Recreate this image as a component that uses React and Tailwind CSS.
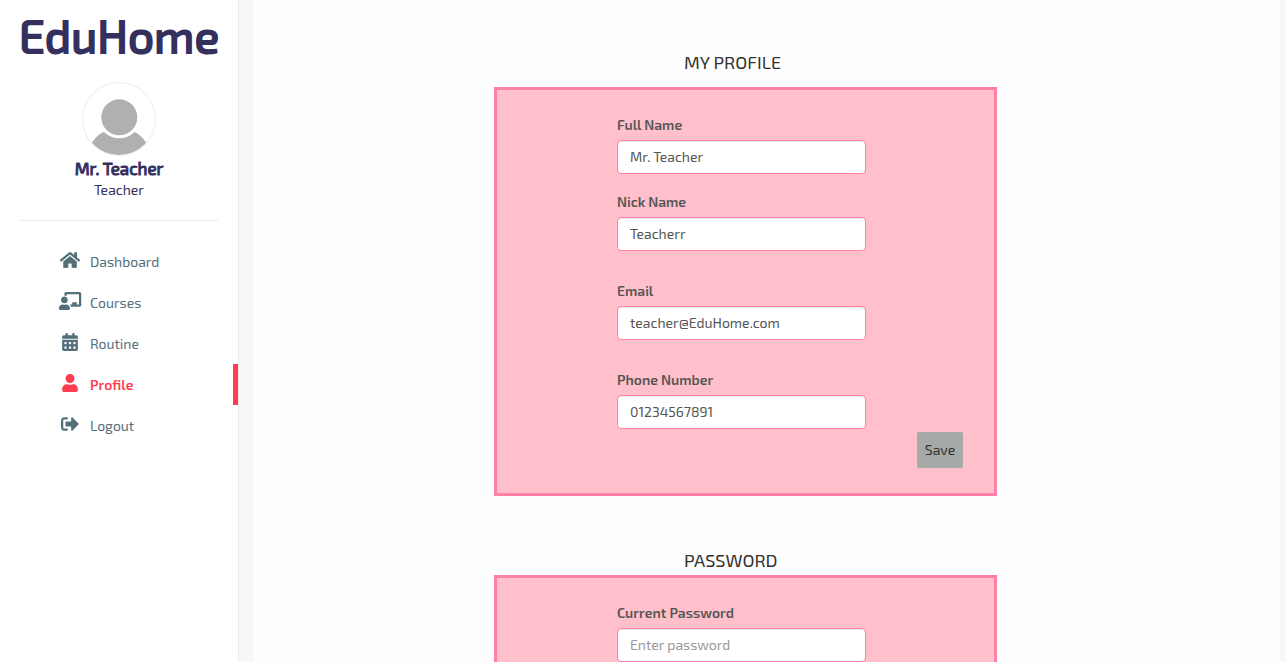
import { FaHome, FaChalkboardTeacher, FaCalendarAlt, FaUser, FaSignOutAlt } from "react-icons/fa";

const links = [
  { label: "Dashboard", Icon: FaHome },
  { label: "Courses", Icon: FaChalkboardTeacher },
  { label: "Routine", Icon: FaCalendarAlt },
  { label: "Profile", Icon: FaUser, active: true },
  { label: "Logout", Icon: FaSignOutAlt },
];

function Avatar() {
  return (
    <svg viewBox="0 0 74 74" className="size-[74px]" role="img" aria-label="Avatar">
      <defs>
        <clipPath id="avatar-clip">
          <circle cx="37" cy="37" r="36" />
        </clipPath>
      </defs>
      <circle cx="37" cy="37" r="36.5" fill="#fff" stroke="#ebebeb" />
      <g clipPath="url(#avatar-clip)">
        <circle cx="37" cy="79" r="33" fill="#b1b0af" />
        <circle cx="37.3" cy="35.3" r="21" fill="#fff" />
        <circle cx="37.3" cy="35.3" r="18" fill="#b1b0af" />
      </g>
    </svg>
  );
}

function NavLink({ label, Icon, active }) {
  return (
    <li>
      <a
        href="#"
        aria-current={active ? "page" : undefined}
        className={
          active
            ? "flex h-[41px] items-center gap-2 border-r-[5px] border-[#ff3d50] pl-[58px] font-semibold text-[#ff3d50]"
            : "flex h-[41px] items-center gap-2 border-r-[5px] border-transparent pl-[58px] text-[#546e7a]"
        }
      >
        <span className="flex w-6 justify-center pb-1">
          <Icon className="h-[18px] w-6" />
        </span>
        {label}
      </a>
    </li>
  );
}

function Field({ id, label, ...input }) {
  return (
    <div className="flex flex-col gap-[5px]">
      <label htmlFor={id} className="font-semibold text-[#555]">
        {label}
      </label>
      <input
        id={id}
        className="h-[34px] w-full rounded border border-[#ff80a6] bg-white px-3 pt-1 pb-1.5 text-[#555] shadow-[inset_0_1px_1px_rgba(0,0,0,0.08)] outline-none placeholder:text-[#999]"
        {...input}
      />
    </div>
  );
}

export default function App() {
  return (
    <div className="flex h-screen overflow-hidden bg-[#f7f7f7] font-['Exo_2','Noto_Sans',sans-serif] text-sm/5">
      <aside className="w-[239px] shrink-0 border-r border-[#ebebeb] bg-white text-[#34305e]">
        <h1 className="pt-2.5 text-center text-[46px]/[50px] font-normal [-webkit-text-stroke:2px]">EduHome</h1>
        <div className="mx-5 mt-[22px] flex flex-col items-center border-b border-[#ebebeb] pb-5">
          <Avatar />
          <h2 className="text-[17px]/6 font-normal [-webkit-text-stroke:1px]">Mr. Teacher</h2>
          <p>Teacher</p>
        </div>
        <nav className="mt-5">
          <ul>
            {links.map((link) => (
              <NavLink key={link.label} {...link} />
            ))}
          </ul>
        </nav>
      </aside>

      <main className="mr-1.5 ml-[15px] min-w-0 flex-1 bg-[#fefefe] pt-[50px] pl-[240px]">
        <section className="w-[64%]">
          <h2 className="pl-[190px] text-lg/6 text-[#333]">MY PROFILE</h2>
          <form className="mt-[13px] border-3 border-[#ff80a6] bg-[#ffc0cb] pt-[25px] pr-[31px] pb-[25px] pl-[120px]">
            <div className="flex w-[249px] flex-col gap-[30px]">
              <div className="flex flex-col gap-[18px]">
                <Field id="full-name" label="Full Name" type="text" defaultValue="Mr. Teacher" />
                <Field id="nick-name" label="Nick Name" type="text" defaultValue="Teacherr" />
              </div>
              <Field id="email" label="Email" type="email" defaultValue="teacher@EduHome.com" />
              <Field id="phone" label="Phone Number" type="tel" defaultValue="01234567891" />
            </div>
            <div className="mt-[3px] flex justify-end">
              <button type="button" className="h-9 w-[46px] rounded-xs bg-[#a6aaa6] text-[#333]">
                Save
              </button>
            </div>
          </form>
        </section>

        <section className="mt-[52px] w-[64%]">
          <h2 className="pl-[190px] text-lg/6 text-[#333]">PASSWORD</h2>
          <form className="mt-[3px] border-3 border-[#ff80a6] bg-[#ffc0cb] pt-[25px] pr-[31px] pb-[25px] pl-[120px]">
            <div className="w-[249px]">
              <Field id="current-password" label="Current Password" type="password" placeholder="Enter password" />
            </div>
          </form>
        </section>
      </main>
    </div>
  );
}
